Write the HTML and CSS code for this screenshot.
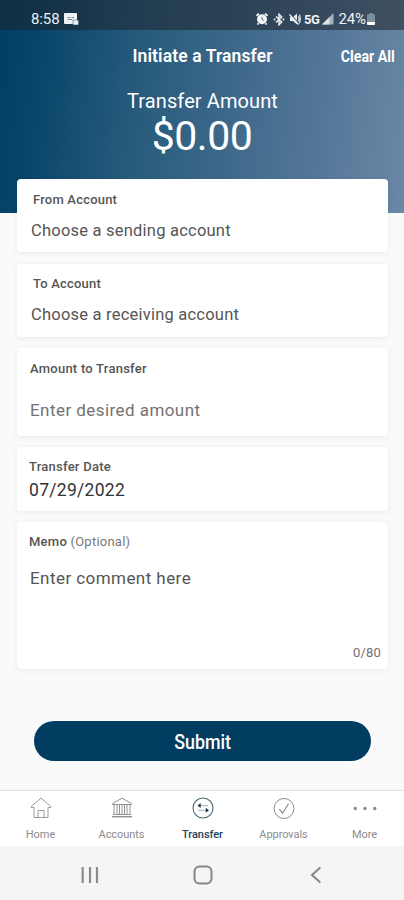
FILE: index.html
```html
<!DOCTYPE html>
<html lang="en">
<head>
<meta charset="utf-8">
<title>Initiate a Transfer</title>
<link rel="stylesheet" href="styles.css">
</head>
<body>
<div class="app">
  <header class="hero">
    <div class="status">
      <span class="clock">8:58</span>
      <svg class="notice" width="15" height="12" viewBox="0 0 15 12"><rect x="0" y="0" width="13" height="11" rx="1" fill="#eef2f5"/><path d="M3.500 4.500h2.500M7.500 4.500h2.500M3.500 6.500h5" stroke="#7b8b97" stroke-width="1"/><rect x="9" y="7" width="5.500" height="5" rx="1" fill="#eef2f5" stroke="#49606f" stroke-width=".6"/></svg>
      <span class="grow"></span>
      <svg class="alarm" width="12" height="12" viewBox="0 0 12 12"><path d="M.5 2.800 3 .6M11.500 2.800 9 .6M2.500 10.200 1.500 11.600M9.500 10.200l1 1.400" stroke="#f3f6f8" stroke-width="1.800"/><circle cx="6" cy="6.300" r="5" fill="#f3f6f8"/><path d="M6 3.800v2.700l1.800 .8" stroke="#566f82" stroke-width="1" fill="none"/></svg>
      <svg class="bluetooth" width="12" height="13" viewBox="0 0 12 13"><path d="M3 3.500 8.700 9 6 11.700V1.300L8.700 4 3 9.500" fill="none" stroke="#e9eef2" stroke-width="1.500"/><circle cx="1.600" cy="6.500" r="1" fill="#e9eef2"/><circle cx="10.400" cy="6.500" r="1" fill="#e9eef2"/></svg>
      <svg class="mute" width="12" height="12" viewBox="0 0 12 12"><path d="M1 4h3l4-3.500v11L4 8H1z" fill="#e9eef2"/><path d="M9.300 3.500q1.500 2.500 0 5M10.500 1.500q1.500 4.500 0 9" fill="none" stroke="#e9eef2" stroke-width="1.100"/><path d="m1.500 1 8.500 9.500" stroke="#34536a" stroke-width="1.100"/><path d="M.5 1.500 9.500 11.500" stroke="#e9eef2" stroke-width="1.200"/></svg>
      <span class="network">5G</span>
      <svg class="signal" width="12" height="12" viewBox="0 0 12 12"><path d="M0 11.500 11.500 0v11.500z" fill="#a5b2bd"/><path d="M0 11.500 7.500 4v7.500z" fill="#dce3e8"/></svg>
      <span class="percent">24%</span>
      <svg class="battery" width="8" height="12" viewBox="0 0 8 12"><path d="M2.500 0h3v1.300H7q1 0 1 1V11q0 1-1 1H1q-1 0-1-1V2.300q0-1 1-1h1.500z" fill="#7d8e9c"/><path d="M0 9h8v2q0 1-1 1H1q-1 0-1-1z" fill="#fff"/></svg>
    </div>
    <div class="titlebar">
      <h1 class="title">Initiate a Transfer</h1>
      <span class="clear">Clear All</span>
    </div>
    <div class="amount-label">Transfer Amount</div>
    <div class="amount">$0.00</div>
  </header>

  <main class="form">
    <section class="card card-account card-from">
      <div class="label">From Account</div>
      <div class="value">Choose a sending account</div>
    </section>
    <section class="card card-account card-to">
      <div class="label">To Account</div>
      <div class="value">Choose a receiving account</div>
    </section>
    <section class="card card-amount">
      <div class="label">Amount to Transfer</div>
      <div class="value hint">Enter desired amount</div>
    </section>
    <section class="card card-date">
      <div class="label">Transfer Date</div>
      <div class="value dark">07/29/2022</div>
    </section>
    <section class="card card-memo">
      <div class="label">Memo <span class="optional">(Optional)</span></div>
      <div class="value">Enter comment here</div>
      <div class="counter">0/80</div>
    </section>
    <div class="submit"><span class="submit-text">Submit</span></div>
  </main>

  <nav class="tabs">
    <div class="tab">
      <svg width="22" height="22" viewBox="0 0 22 22" fill="none" stroke="#9b9b9b" stroke-width="1"><path d="M4 20.500V10.500H1.200v-1L11 1.200l9.800 8.300v1H18V20.500h-4V13.500H8v7H4M8 20.500h6"/></svg>
      <span>Home</span>
    </div>
    <div class="tab">
      <svg width="22" height="22" viewBox="0 0 22 22" fill="none" stroke="#929292" stroke-width="1"><path d="M1.500 6.500 11 1.200l9.500 5.300v1h-19zM3 7.500V17M6 7.500V17M8.500 7.500V17M11 7.500V17M13.500 7.500V17M16 7.500V17M19 7.500V17M2 17.500h18"/><path d="M1 19.700h20" stroke-width="1.400"/></svg>
      <span>Accounts</span>
    </div>
    <div class="tab active">
      <svg width="22" height="22" viewBox="0 0 22 22" fill="none" stroke="#4b6270" stroke-width="1.100"><circle cx="11" cy="11" r="10"/><path d="M8 8.500h8M6 13.300h8" stroke="#b5c0c7" stroke-width="1.300"/><path d="m5.500 8.500 3.200-2.500v5zM17 13.300l-3.200-2.500v5z" fill="#173b53" stroke="none"/></svg>
      <span>Transfer</span>
    </div>
    <div class="tab">
      <svg width="22" height="22" viewBox="0 0 22 22" fill="none" stroke="#8d8d8d" stroke-width="1"><circle cx="11" cy="11.500" r="10"/><path d="m6.200 12 3.300 4.200 6-9.500" stroke-width="1.200"/></svg>
      <span>Approvals</span>
    </div>
    <div class="tab">
      <svg width="24" height="22" viewBox="0 0 24 22" fill="#8b8b8b"><circle cx="2.300" cy="11.500" r="1.700"/><circle cx="12" cy="11.500" r="1.700"/><circle cx="21.700" cy="11.500" r="1.700"/></svg>
      <span>More</span>
    </div>
  </nav>
  <div class="system">
    <svg width="18" height="18" viewBox="0 0 18 18" stroke="#8c8c8c" stroke-width="2.200"><path d="M1.700 1v16M9 1v16M16 1v16"/></svg>
    <svg width="20" height="20" viewBox="0 0 20 20" fill="none" stroke="#858585" stroke-width="2"><rect x="1.500" y="1.500" width="17" height="17" rx="5"/></svg>
    <svg width="12" height="18" viewBox="0 0 12 18" fill="none" stroke="#858585" stroke-width="2"><path d="M10.300 1.500 2 9l8.300 7.500"/></svg>
  </div>
</div>
</body>
</html>
```

FILE: styles.css
```css
* { box-sizing: border-box; }
body { margin: 0; font-family: Roboto, sans-serif; background: #fafafa; }
.app { width: 404px; height: 900px; overflow: hidden; display: flex; flex-direction: column; background: #fafafa; }
.app svg { display: block; flex: none; }
.app span { white-space: nowrap; }

.hero { height: 213px; flex: none; color: #fff; background: linear-gradient(97deg, #003e64 0%, #07456a 10%, #255a7b 33%, #3d688a 56%, #567899 80%, #6b88a5 100%); }
.status { height: 30px; display: flex; align-items: center; padding: 8px 29px 0 31px; background: rgba(30, 34, 42, 0.53); color: #eef2f5; }
.clock { font-size: 15px; line-height: 20px; letter-spacing: -0.100px; margin-right: 4px; }
.grow { flex: 1; }
.alarm { margin-right: 5px; }
.bluetooth { margin-right: 4px; }
.mute { margin-right: 3px; }
.network { font-size: 13px; font-weight: 700; letter-spacing: -0.400px; margin-right: 3px; }
.signal { margin-right: 4px; }
.percent { font-size: 15px; letter-spacing: -0.100px; margin-right: 1px; }

.titlebar { height: 52px; display: grid; grid-template-columns: 1fr auto 1fr; align-items: center; padding-right: 9px; }
.title { grid-column: 2; margin: 0 0 0 10px; font-size: 17.500px; font-weight: 600; line-height: 24px; letter-spacing: 0.100px; white-space: nowrap; }
.clear { justify-self: end; font-size: 16.500px; font-weight: 700; transform: scaleX(0.86); transform-origin: right; }
.amount-label { margin-top: 6px; padding-left: 1px; text-align: center; font-size: 20px; line-height: 26px; letter-spacing: 0.100px; }
.amount { margin-top: 1px; text-align: center; font-size: 41px; line-height: 42px; letter-spacing: -0.500px; }

.form { flex: 1; margin-top: -34px; padding: 0 16px 0 17px; display: flex; flex-direction: column; }
.card { flex: none; background: #fff; border-radius: 4px; box-shadow: 0 1px 6px rgba(0, 0, 0, 0.07); display: flex; flex-direction: column; color: #555; }
.label { font-size: 13px; line-height: 16px; font-weight: 500; letter-spacing: 0.240px; }
.value { font-size: 17px; line-height: 20px; letter-spacing: 0.440px; }
.card-account { height: 73px; padding: 13px 14px 0; }
.card-from { margin-bottom: 12px; }
.card-to { margin-bottom: 11px; }
.card-account .label { padding-left: 2px; letter-spacing: 0.200px; }
.card-account .value { margin-top: 12px; font-size: 16.500px; letter-spacing: 0.220px; }
.card-from .value { margin-top: 13px; }
.card-to { padding-top: 12px; }
.card-to .value { margin-top: 13px; }
.card-amount { height: 88px; padding: 13px 13px 0; margin-bottom: 11px; }
.card-amount .value { margin-top: 23px; }
.card-date { height: 64px; padding: 12px 12px 0; margin-bottom: 11px; }
.card-date .value { margin-top: 5px; font-size: 17.500px; letter-spacing: 0.300px; }
.card-memo { height: 147px; padding: 12px 7px 7px 12px; }
.card-memo .value { margin-top: 18px; padding-left: 1px; }
.hint { color: #727272; }
.dark { color: #333; }
.optional { font-weight: 400; color: #777; }
.counter { margin-top: auto; text-align: right; font-size: 13px; line-height: 18px; color: #707070; letter-spacing: 0.200px; }
.submit { width: 337px; height: 40px; margin: 52px 0 0 17px; padding-top: 1px; border-radius: 20px; background: #003d61; color: #fff; display: flex; align-items: center; justify-content: center; font-size: 20.500px; font-weight: 500; }
.submit-text { transform: scaleX(0.87); }

.tabs { height: 56px; flex: none; display: grid; grid-template-columns: repeat(5, 81px); background: #fff; border-top: 1px solid #e2e2e2; }
.tab { display: flex; flex-direction: column; align-items: center; padding-top: 6px; gap: 9px; font-size: 11px; line-height: 14px; letter-spacing: -0.050px; color: #8c8c8c; }
.active { color: #24445a; font-weight: 500; }
.system { height: 54px; flex: none; background: #f5f5f5; display: grid; grid-template-columns: repeat(3, 113px); justify-content: center; justify-items: center; align-items: center; padding: 3px 0 0 2px; }
```
